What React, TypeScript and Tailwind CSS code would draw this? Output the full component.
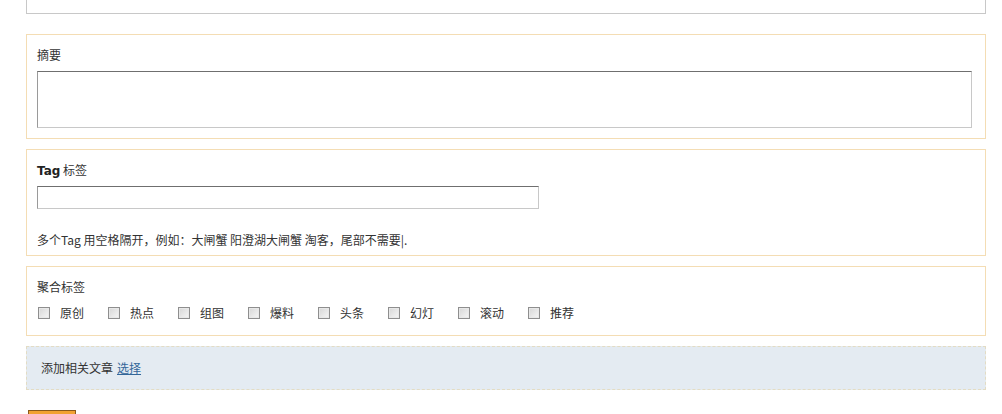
import React from "react";

const tags = ["原创", "热点", "组图", "爆料", "头条", "幻灯", "滚动", "推荐"];

export default function App() {
  return (
    <div
      className="w-[1002px] h-[414px] overflow-hidden bg-white text-[12px] text-[#333]"
      style={{ fontFamily: '"Noto Sans CJK SC", "Liberation Sans", sans-serif' }}
    >
      <div className="ml-[26px] w-[960px]">
        <div className="h-[14px] border-x border-b border-[#c8c8c8]" />

        <div className="mt-[20px] border border-[#f4ddb4] pt-[11px] pb-[10px] px-[10px]">
          <div className="h-[18px] leading-[18px]">摘要</div>
          <div className="mt-[7px] h-[57px] w-[935px] border border-t-[#6f6f6f] border-l-[#9a9a9a] border-r-[#c8c8c8] border-b-[#c8c8c8] bg-white" />
        </div>

        <div className="mt-[10px] border border-[#f4ddb4] pt-[11px] pb-[6px] px-[10px]">
          <div className="h-[18px] leading-[18px]">
            <span className="font-bold text-[#222]" style={{ fontFamily: '"DejaVu Sans", "Liberation Sans", sans-serif' }}>Tag</span> 标签
          </div>
          <div className="mt-[7px] h-[23px] w-[502px] border border-t-[#6f6f6f] border-l-[#9a9a9a] border-r-[#c8c8c8] border-b-[#c8c8c8] bg-white" />
          <div className="mt-[22px] h-[18px] leading-[18px]">
            多个Tag 用空格隔开，例如：大闸蟹 阳澄湖大闸蟹 淘客，尾部不需要|.
          </div>
        </div>

        <div className="mt-[10px] border border-[#f4ddb4] pt-[11px] pb-[13px] px-[10px]">
          <div className="h-[18px] leading-[18px]">聚合标签</div>
          <div className="mt-[8px] flex items-center h-[18px]">
            {tags.map((t) => (
              <div key={t} className="w-[70px] flex items-center shrink-0">
                <span className="ml-[1px] w-[12px] h-[12px] border border-[#8e8e8e] bg-gradient-to-br from-[#d6d6d6] to-[#f6f6f6] shadow-[inset_0_0_0_1px_#e8e8e8]" />
                <span className="ml-[10px] leading-[18px]">{t}</span>
              </div>
            ))}
          </div>
        </div>

        <div className="mt-[10px] h-[44px] border border-dashed border-[#e3dcc4] bg-[#e4ebf2] px-[14px] flex items-center">
          <span>添加相关文章</span>
          <a href="#" className="ml-[4px] text-[#336699] underline">选择</a>
        </div>

        <div className="mt-[20px] ml-[2px] w-[48px] h-[24px] border border-[#8a5a1c] bg-[#f2a233]" />
      </div>
    </div>
  );
}
